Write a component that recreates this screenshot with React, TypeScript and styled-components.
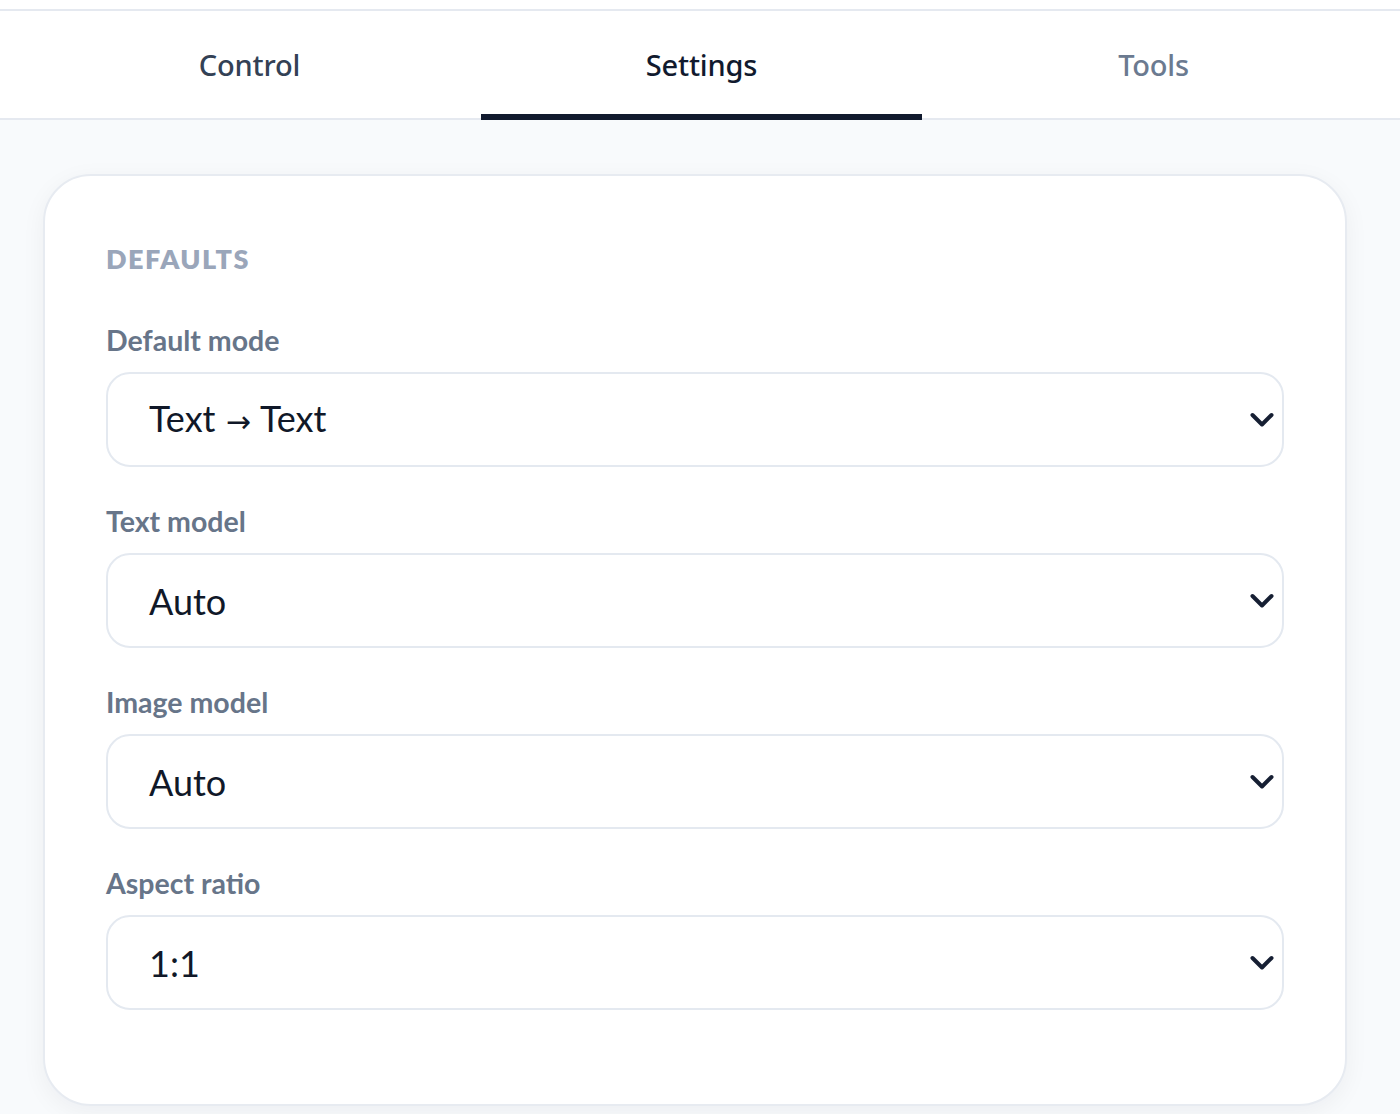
import React, { useState } from "react";
import styled, { createGlobalStyle } from "styled-components";

const GlobalStyle = createGlobalStyle`
  * { box-sizing: border-box; }
  html, body { margin: 0; padding: 0; }
  body {
    background: #f8fafc;
    font-family: Lato, "Noto Sans", "Liberation Sans", sans-serif;
    -webkit-font-smoothing: antialiased;
  }
`;

const Page = styled.div`
  min-height: 1114px;
  display: flex;
  flex-direction: column;
  background: #f8fafc;
`;

const Header = styled.header`
  background: #ffffff;
  padding-top: 9px;
`;

const TopRule = styled.div`
  border-top: 2px solid #e5e9f0;
`;

const TabList = styled.nav`
  display: grid;
  grid-template-columns: repeat(3, 1fr);
  column-gap: 11px;
  padding: 0 26px 0 29px;
  border-bottom: 2px solid #e5e9f0;
`;

const Tab = styled.button<{ $active?: boolean; $tone: string }>`
  height: 109px;
  margin-bottom: -2px;
  display: flex;
  align-items: center;
  justify-content: center;
  padding: 4px 0 0;
  border: none;
  border-bottom: 6px solid ${(p) => (p.$active ? "#111a2e" : "transparent")};
  background: transparent;
  font-family: "Noto Sans", "Open Sans", sans-serif;
  font-size: 29px;
  font-weight: 500;
  letter-spacing: -0.2px;
  color: ${(p) => p.$tone};
  cursor: pointer;
`;

const Main = styled.main`
  flex: 1;
  padding: 54px 53px 0 43px;
`;

const Card = styled.section`
  background: #ffffff;
  border: 2px solid #e7ebf1;
  border-radius: 48px;
  padding: 66px 61px 94px;
  box-shadow: 0 6px 24px rgba(15, 23, 42, 0.05);
  display: flex;
  flex-direction: column;
`;

const SectionTitle = styled.h2`
  margin: 0 0 47px;
  font-family: Lato, sans-serif;
  font-size: 27px;
  line-height: 34px;
  font-weight: 800;
  letter-spacing: 1.5px;
  text-transform: uppercase;
  color: #9aa6ba;
`;

const Fields = styled.div`
  display: flex;
  flex-direction: column;
  gap: 37px;
`;

const Field = styled.label`
  display: flex;
  flex-direction: column;
  gap: 15px;
`;

const FieldLabel = styled.span`
  font-family: Lato, sans-serif;
  font-size: 28.5px;
  line-height: 34px;
  font-weight: 700;
  color: #677589;
`;

const SelectBox = styled.div`
  position: relative;
  height: 95px;
  border: 2px solid #e4e9f0;
  border-radius: 24px;
  background: #ffffff;
  display: flex;
  align-items: center;
  padding: 0 60px 0 41px;
`;

const Value = styled.span`
  font-family: Lato, sans-serif;
  font-size: 36px;
  line-height: 44px;
  color: #101828;
  white-space: nowrap;
`;

const Arrow = styled.span`
  font-family: "DejaVu Sans", sans-serif;
  font-size: 30px;
  margin: 0 1px;
`;

const NativeSelect = styled.select`
  appearance: none;
  -webkit-appearance: none;
  position: absolute;
  inset: 0;
  width: 100%;
  height: 100%;
  opacity: 0;
  border: none;
  font-size: 36px;
  cursor: pointer;
`;

const Chevron = styled.svg`
  position: absolute;
  right: 8px;
  top: 50%;
  transform: translateY(-50%);
  pointer-events: none;
`;

type FieldDef = { label: string; options: string[] };

const fields: FieldDef[] = [
  { label: "Default mode", options: ["Text → Text", "Text → Image", "Image → Text"] },
  { label: "Text model", options: ["Auto"] },
  { label: "Image model", options: ["Auto"] },
  { label: "Aspect ratio", options: ["1:1", "16:9", "9:16", "4:3"] },
];

const tabs = [
  { name: "Control", tone: "#334155" },
  { name: "Settings", tone: "#111a2e" },
  { name: "Tools", tone: "#6b7a90" },
];

function ChevronIcon() {
  return (
    <Chevron width="24" height="24" viewBox="0 0 24 24" fill="none">
      <path
        d="M2.5 7 L12 16.5 L21.5 7"
        stroke="#161f33"
        strokeWidth="4"
        strokeLinecap="round"
        strokeLinejoin="round"
      />
    </Chevron>
  );
}

function renderValue(v: string) {
  const parts = v.split("→");
  if (parts.length < 2) return v;
  return (
    <>
      {parts[0]}
      <Arrow>→</Arrow>
      {parts[1]}
    </>
  );
}

function SelectField({ def }: { def: FieldDef }) {
  const [value, setValue] = useState(def.options[0]);
  return (
    <Field>
      <FieldLabel>{def.label}</FieldLabel>
      <SelectBox>
        <Value>{renderValue(value)}</Value>
        <NativeSelect value={value} onChange={(e) => setValue(e.target.value)}>
          {def.options.map((o) => (
            <option key={o}>{o}</option>
          ))}
        </NativeSelect>
        <ChevronIcon />
      </SelectBox>
    </Field>
  );
}

export default function App() {
  const [active, setActive] = useState("Settings");
  return (
    <>
      <GlobalStyle />
      <Page>
        <Header>
          <TopRule />
          <TabList>
            {tabs.map((t) => (
              <Tab
                key={t.name}
                $active={active === t.name}
                $tone={t.tone}
                onClick={() => setActive(t.name)}
              >
                {t.name}
              </Tab>
            ))}
          </TabList>
        </Header>
        <Main>
          <Card>
            <SectionTitle>Defaults</SectionTitle>
            <Fields>
              {fields.map((f) => (
                <SelectField key={f.label} def={f} />
              ))}
            </Fields>
          </Card>
        </Main>
      </Page>
    </>
  );
}
